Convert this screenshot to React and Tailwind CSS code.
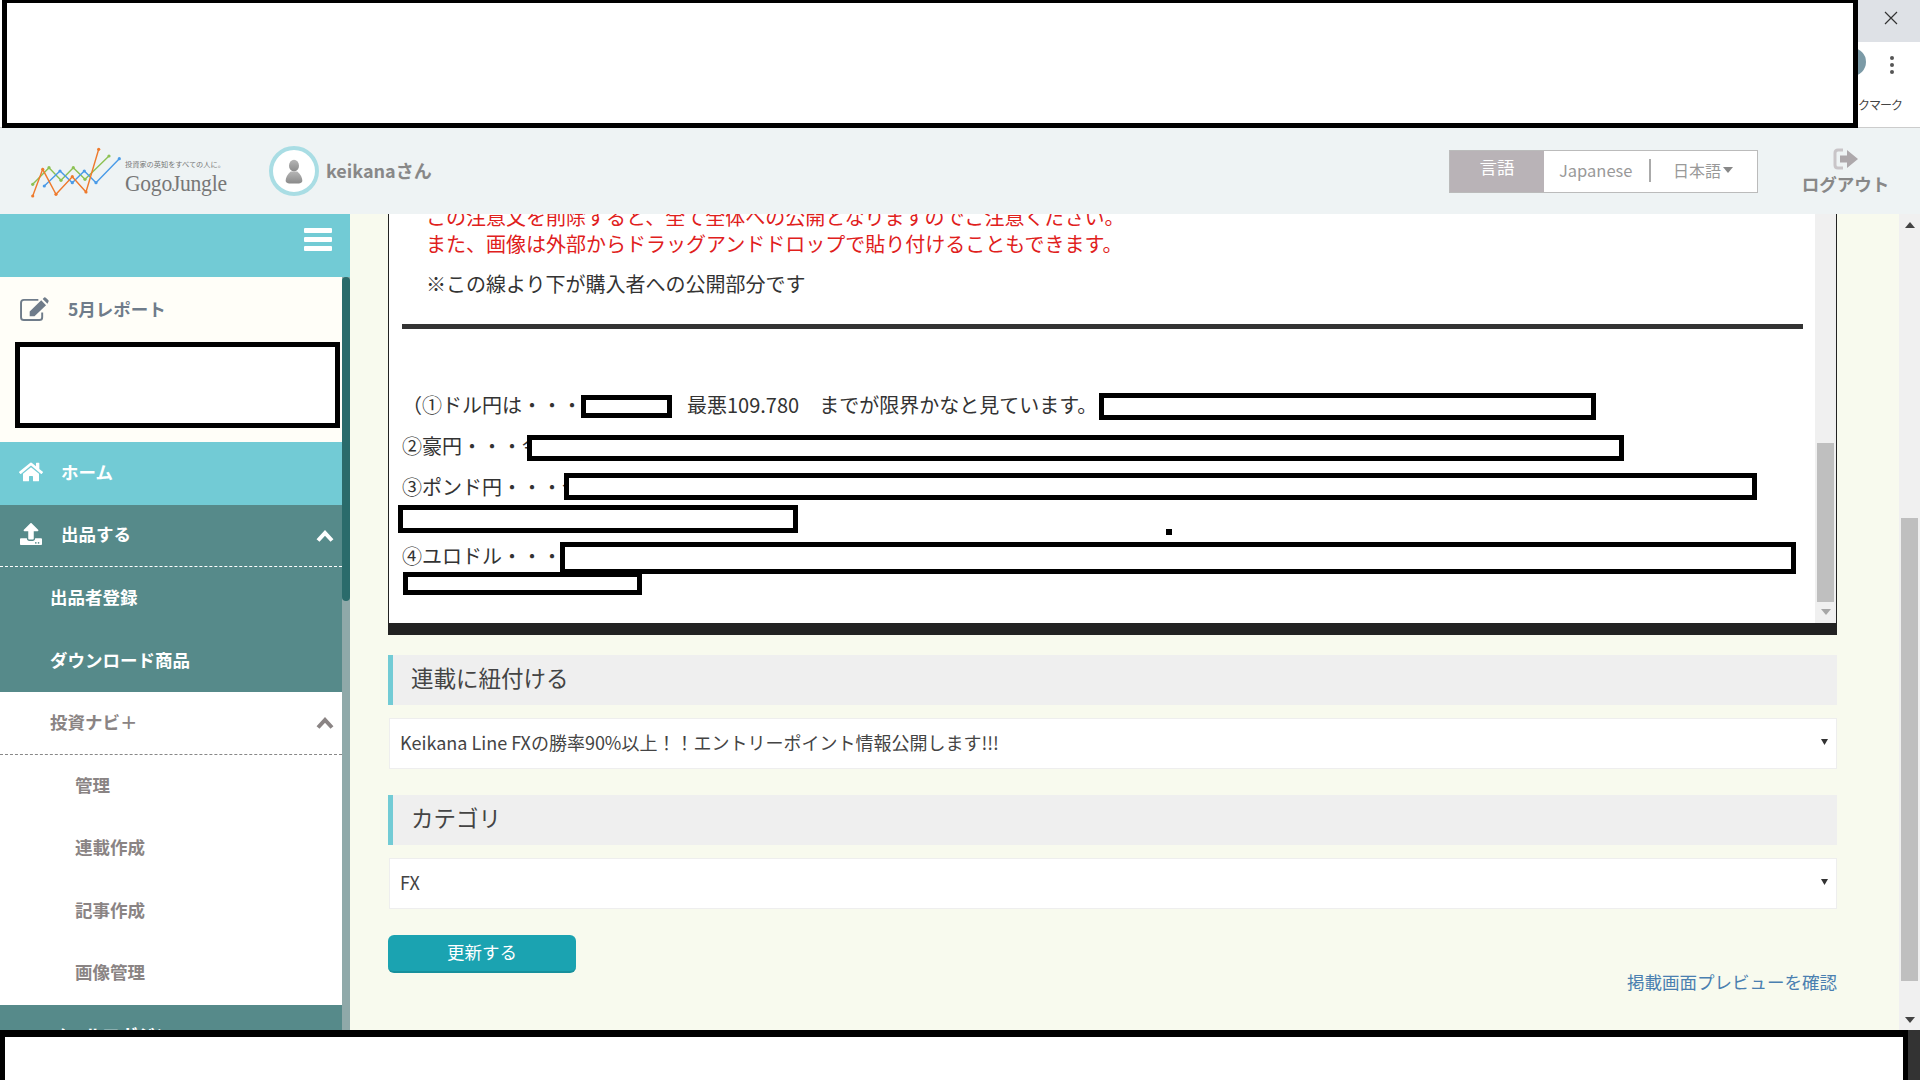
import React from "react";
import { FaHome, FaUpload } from "react-icons/fa";

// small triangle used by the scrollbars and the selects
const Tri = ({ up, className }) => (
  <svg viewBox="0 0 10 6" preserveAspectRatio="none" className={className}>
    <polygon points={up ? "5,0 10,6 0,6" : "0,0 10,0 5,6"} fill="currentColor" />
  </svg>
);

const Logo = () => (
  <div className="flex items-center">
    <svg viewBox="0 0 100 60" className="w-[100px] h-[60px] shrink-0 -mr-[3px]" fill="none" strokeWidth="1.4">
      <polyline stroke="#8cc152" points="4.7,43.3 21,26.7 33,39.3 45.3,26.7 57,38.3 81,15" />
      <polyline stroke="#4a9be8" points="16.3,45 32,30 44.3,41.7 56.3,30 68,41.7 91.3,17.7" />
      <polyline stroke="#ee7a2c" points="4.7,55 14.7,28.3 28,53.3 44.3,35.7 58,51 70.7,8.3" />
      <g fill="#8cc152" stroke="none">
        <circle cx="4.7" cy="43.3" r="1.6" /><circle cx="21" cy="26.7" r="1.6" /><circle cx="33" cy="39.3" r="1.6" />
        <circle cx="45.3" cy="26.7" r="1.6" /><circle cx="57" cy="38.3" r="1.6" /><circle cx="81" cy="15" r="1.6" />
      </g>
      <g fill="#4a9be8" stroke="none">
        <circle cx="16.3" cy="45" r="1.6" /><circle cx="32" cy="30" r="1.6" /><circle cx="44.3" cy="41.7" r="1.6" />
        <circle cx="56.3" cy="30" r="1.6" /><circle cx="68" cy="41.7" r="1.6" /><circle cx="91.3" cy="17.7" r="1.6" />
      </g>
      <g fill="#ee7a2c" stroke="none">
        <circle cx="4.7" cy="55" r="1.6" /><circle cx="14.7" cy="28.3" r="1.6" /><circle cx="28" cy="53.3" r="1.6" />
        <circle cx="44.3" cy="35.7" r="1.6" /><circle cx="58" cy="51" r="1.6" /><circle cx="70.7" cy="8.3" r="1.6" />
      </g>
    </svg>
    <div className="w-[144px] mt-[14px] text-[#777]">
      <div className="text-[7.2px] leading-[10px] whitespace-nowrap">投資家の英知をすべての人に。</div>
      <div className="font-['Liberation_Serif',serif] text-[24px] leading-[28px] tracking-[-0.3px] origin-left scale-x-[0.9]">GogoJungle</div>
    </div>
  </div>
);

const Avatar = () => (
  <div className="w-[50px] h-[50px] rounded-full border-[4px] border-[#a9dde4] bg-white flex items-center justify-center">
    <svg viewBox="0 0 24 30" className="w-[20px] h-[25px]">
      <defs>
        <linearGradient id="av" x1="0" y1="0" x2="0" y2="1">
          <stop offset="0" stopColor="#b5b5b5" />
          <stop offset="1" stopColor="#8a8a8a" />
        </linearGradient>
      </defs>
      <ellipse cx="12" cy="8" rx="6" ry="7" fill="url(#av)" />
      <path d="M8 15 C4 18 2 23 2 26 C2 29 6 29.5 12 29.5 C18 29.5 22 29 22 26 C22 23 20 18 16 15 Z" fill="url(#av)" />
    </svg>
  </div>
);

const LogoutIcon = () => (
  <svg viewBox="0 0 26 22" className="w-[26px] h-[22px] mt-[3px]">
    <path d="M10 2 H5 Q2 2 2 5 V17 Q2 20 5 20 H10" fill="none" stroke="#c9c5c8" strokeWidth="3" />
    <path d="M7 7.5 H14 V2 L25 11 L14 20 V14.5 H7 Z" fill="#ada8ab" />
  </svg>
);

const EditIcon = () => (
  <svg viewBox="0 0 32 26" className="w-[31px] h-[25px] mr-[18px] shrink-0">
    <path d="M20 3 H5 Q2 3 2 6 V21 Q2 24 5 24 H21 Q24 24 24 21 V16" fill="none" stroke="currentColor" strokeWidth="2" />
    <path d="M11 15 L23 3.5 L28 8.5 L16 20 H11 Z M24.5 2 L26 0.5 Q27 0 28 1 L30.5 3.5 Q31 4.5 30.5 5 L29.5 7 Z" fill="currentColor" />
  </svg>
);

const Chevron = () => (
  <svg viewBox="0 0 18 14" className="ml-auto mr-[8px] mt-[3px] w-[18px] h-[14px] shrink-0">
    <polyline points="2,11.5 9,4 16,11.5" fill="none" stroke="currentColor" strokeWidth="4" />
  </svg>
);

const Row = ({ icon, chevron, dashed, className, children }) => (
  <div className={`h-[62.5px] shrink-0 flex items-center pb-[2px] font-bold text-[17.5px] ${dashed ? "border-b border-dashed " : ""}${className}`}>
    {icon}
    {children}
    {chevron && <Chevron />}
  </div>
);

const Sidebar = () => (
  <div className="w-[350px] shrink-0 flex flex-col">
    <div className="h-[63px] shrink-0 bg-[#72cbd5] flex justify-end items-center pr-[18px] pb-[12px]">
      <div className="flex flex-col gap-[4px]">
        <div className="w-[28px] h-[5px] rounded-[1px] bg-white" />
        <div className="w-[28px] h-[5px] rounded-[1px] bg-white" />
        <div className="w-[28px] h-[5px] rounded-[1px] bg-white" />
      </div>
    </div>
    <div className="flex-1 flex min-h-0">
      <div className="flex-1 flex flex-col overflow-hidden bg-white">
        <div className="h-[165px] shrink-0 bg-[#fffef8]">
          <div className="h-[65px] flex items-center pl-[19px] font-bold text-[17.5px] text-[#6f7c8a]">
            <EditIcon />
            5月レポート
          </div>
          <div className="ml-[15px] w-[325px] h-[86px] border-[5px] border-black bg-white" />
        </div>
        <Row className="text-white bg-[#72cbd5] pl-[19px]" icon={<FaHome className="w-[24px] h-[22px] mr-[18px]" />}>ホーム</Row>
        <Row dashed chevron className="text-white bg-[#568a8a] border-white pl-[19px]" icon={<FaUpload className="w-[24px] h-[22px] mr-[18px]" />}>出品する</Row>
        <div className="bg-[#568a8a] text-white shrink-0">
          <Row className="pl-[50px]">出品者登録</Row>
          <Row className="pl-[50px]">ダウンロード商品</Row>
        </div>
        <Row dashed chevron className="text-[#8a8484] border-[#888] pl-[50px]">投資ナビ＋</Row>
        <div className="text-[#8a8484] shrink-0">
          <Row className="pl-[75px]">管理</Row>
          <Row className="pl-[75px]">連載作成</Row>
          <Row className="pl-[75px]">記事作成</Row>
          <Row className="pl-[75px]">画像管理</Row>
        </div>
        <Row className="text-white bg-[#568a8a] pl-[50px]">メールマガジン</Row>
      </div>
      <div className="w-[8px] shrink-0 bg-[#8fa9a9]">
        <div className="h-[324px] rounded-[4px] bg-[#2a6b6b]" />
      </div>
    </div>
  </div>
);

const Header = () => (
  <div className="h-[86px] shrink-0 bg-[#eef3f4] flex items-center pl-[28px]">
    <Logo />
    <Avatar />
    <span className="ml-[7px] pb-[3px] font-bold text-[#888] text-[18px] leading-none">keikanaさん</span>
    <div className="ml-auto flex h-[43px] w-[309px] border border-[#bbb] bg-white text-[#999]">
      <div className="w-[94px] bg-[#b9b3b7] text-white text-[17.5px] flex items-center justify-center pb-[7px]">言語</div>
      <div className="flex-1 flex items-center text-[16.5px] pl-[15px] pb-[2px]">
        <span className="w-[76px]">Japanese</span>
        <span className="w-[2px] h-[23px] bg-[#aaa] ml-[14px]" />
        <span className="ml-[22px] text-[16px]">日本語</span>
        <Tri className="w-[10px] h-[6px] text-[#888] ml-[2px]" />
      </div>
    </div>
    <div className="ml-[44px] mr-[31px] w-[87px] flex flex-col items-center">
      <LogoutIcon />
      <span className="font-bold text-[#888] text-[17.5px] leading-[28px] whitespace-nowrap">ログアウト</span>
    </div>
  </div>
);

const Redact = ({ className }) => <div className={`absolute border-black bg-white ${className}`} />;

const Editor = () => (
  <div className="relative h-[409px] flex bg-white border-x border-[#222] overflow-hidden">
    <div className="flex-1 text-[20px] text-[#333]">
      <div className="-mt-[11px] pl-[37px] text-[#e0201c] leading-[27px] whitespace-nowrap">
        <p>この注意文を削除すると、全て全体への公開となりますのでご注意ください。</p>
        <p>また、画像は外部からドラッグアンドドロップで貼り付けることもできます。</p>
      </div>
      <p className="mt-[15px] pl-[37px] leading-[24px]">※この線より下が購入者への公開部分です</p>
      <div className="mt-[28px] ml-[13px] mr-[12px] h-[5px] bg-[#333]" />
      <div className="mt-[62px] pl-[13px] leading-[28px]">
        <p className="mb-[13px] whitespace-nowrap">
          （①ドル円は・・・<span className="inline-block w-[105px]" />最悪109.780　までが限界かなと見ています。
        </p>
        <p className="mb-[13px]">②豪円・・・今</p>
        <p className="mb-[13px] h-[56px]">③ポンド円・・・今</p>
        <p>④ユロドル・・・</p>
      </div>
    </div>
    <div className="w-[21px] shrink-0 bg-[#f0f0f0] flex flex-col items-center">
      <div className="mt-[229px] w-[17px] h-[159px] bg-[#bfbfbf]" />
      <Tri className="mt-[7px] w-[10px] h-[6px] text-[#a6a6a6]" />
    </div>
    <Redact className="left-[192px] top-[181px] w-[91px] h-[23px] border-[5px]" />
    <Redact className="left-[710px] top-[179px] w-[497px] h-[27px] border-[5px]" />
    <Redact className="left-[138px] top-[221px] w-[1097px] h-[26px] border-[5px]" />
    <Redact className="left-[175px] top-[259px] w-[1193px] h-[27px] border-[5px]" />
    <Redact className="left-[9px] top-[291px] w-[400px] h-[28px] border-[5px]" />
    <Redact className="left-[777px] top-[315px] w-[5px] h-[6px] border-[3px]" />
    <Redact className="left-[171px] top-[328px] w-[1236px] h-[32px] border-[5px]" />
    <Redact className="left-[14px] top-[358px] w-[239px] h-[23px] border-[5px]" />
  </div>
);

const SectionTitle = ({ className, children }) => (
  <h2 className={`h-[50px] flex items-center bg-[#efefef] border-l-[5px] border-[#72cbd5] pl-[18px] pb-[5px] text-[22.5px] text-[#444] ${className}`}>
    {children}
  </h2>
);

const Select = ({ children }) => (
  <div className="mt-[13px] h-[51px] ml-px flex items-center justify-between bg-white border border-[#eeeeee] pl-[10px] pr-[8px] pb-[3px] text-[18px] text-[#444]">
    {children}
    <Tri className="w-[7px] h-[6px] text-[#333]" />
  </div>
);

const Main = () => (
  <div className="flex-1 min-w-0 bg-[#f8faee] pl-[38px] pr-[62px]">
    <Editor />
    <div className="h-[12px] bg-[#222]" />
    <SectionTitle className="mt-[20px]">連載に紐付ける</SectionTitle>
    <Select>Keikana Line FXの勝率90%以上！！エントリーポイント情報公開します!!!</Select>
    <SectionTitle className="mt-[26px]">カテゴリ</SectionTitle>
    <Select>FX</Select>
    <div className="mt-[26px] flex justify-between items-start">
      <button className="w-[188px] h-[38px] rounded-[6px] bg-[#1ba3b1] border-b-2 border-[#17909c] text-white text-[17.5px] leading-none pb-[3px]">更新する</button>
      <a className="mt-[34px] text-[17.5px] leading-[26px] text-[#4a7fb0]">掲載画面プレビューを確認</a>
    </div>
  </div>
);

const PageScrollbar = () => (
  <div className="w-[21px] shrink-0 bg-[#f0f0f0] flex flex-col items-center">
    <Tri up className="mt-[8px] w-[10px] h-[6px] text-[#444]" />
    <div className="mt-[290px] w-[17px] h-[463px] bg-[#bfbfbf]" />
    <Tri className="mt-[36px] w-[10px] h-[6px] text-[#444]" />
  </div>
);

export default function App() {
  return (
    <div className="w-screen h-screen overflow-hidden flex flex-col bg-white font-['Noto_Sans_CJK_JP','Noto_Sans',sans-serif]">
      {/* browser chrome, mostly blacked out */}
      <div className="h-[128px] shrink-0 flex pl-[2px] border-b border-[#ccc]">
        <div className="w-[1856px] h-[128px] border-x-[5px] border-b-[5px] border-t-[3px] border-black bg-white" />
        <div className="flex-1 flex flex-col overflow-hidden">
          <div className="h-[42px] bg-[#dee1e6] flex items-center justify-end pr-[22px] pb-[6px] text-[#333]">
            <svg viewBox="0 0 14 14" className="w-[14px] h-[14px]" stroke="currentColor" strokeWidth="1.2"><path d="M1 1 L13 13 M13 1 L1 13" /></svg>
          </div>
          <div className="relative flex-1">
            <div className="absolute -left-[24px] top-[6px] w-[32px] h-[28px] rounded-full bg-[#7b9aa6]" />
            <div className="absolute left-[32px] top-[14px] flex flex-col gap-[3px]">
              <span className="w-[4px] h-[4px] rounded-full bg-[#555]" />
              <span className="w-[4px] h-[4px] rounded-full bg-[#555]" />
              <span className="w-[4px] h-[4px] rounded-full bg-[#555]" />
            </div>
            <div className="absolute left-0 top-[53px] text-[12px] tracking-[-1px] leading-[20px] whitespace-nowrap text-[#444]">クマーク</div>
          </div>
        </div>
      </div>
      <Header />
      <div className="flex-1 flex min-h-0">
        <Sidebar />
        <Main />
        <PageScrollbar />
      </div>
      {/* blacked out taskbar */}
      <div className="h-[50px] shrink-0 flex bg-[#333]">
        <div className="w-[1908px] h-[60px] border-[5px] border-t-[7px] border-black bg-white" />
      </div>
    </div>
  );
}
